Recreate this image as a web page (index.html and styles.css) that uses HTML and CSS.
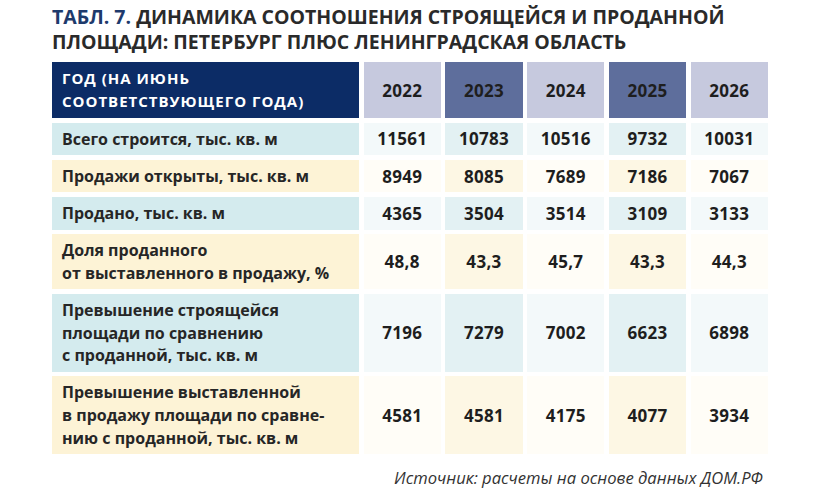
FILE: index.html
```html
<!DOCTYPE html>
<html lang="ru">
<head>
<meta charset="utf-8">
<title>Табл. 7</title>
<link rel="stylesheet" href="styles.css">
</head>
<body>
<div class="page">
  <h1 class="title"><span class="num">ТАБЛ. 7.</span> ДИНАМИКА СООТНОШЕНИЯ СТРОЯЩЕЙСЯ И ПРОДАННОЙ<br>ПЛОЩАДИ: ПЕТЕРБУРГ ПЛЮС ЛЕНИНГРАДСКАЯ ОБЛАСТЬ</h1>
  <div class="table">
    <div class="hlabel">ГОД (НА ИЮНЬ<br>СООТВЕТСТВУЮЩЕГО ГОДА)</div>
    <div class="hyear light">2022</div>
    <div class="hyear dark">2023</div>
    <div class="hyear light">2024</div>
    <div class="hyear dark">2025</div>
    <div class="hyear light">2026</div>

    <div class="label blue">Всего строится, тыс. кв. м</div>
    <div class="val blue-l">11561</div>
    <div class="val blue-d">10783</div>
    <div class="val blue-l">10516</div>
    <div class="val blue-d">9732</div>
    <div class="val blue-l">10031</div>

    <div class="label yellow">Продажи открыты, тыс. кв. м</div>
    <div class="val yel-l">8949</div>
    <div class="val yel-d">8085</div>
    <div class="val yel-l">7689</div>
    <div class="val yel-d">7186</div>
    <div class="val yel-l">7067</div>

    <div class="label blue">Продано, тыс. кв. м</div>
    <div class="val blue-l">4365</div>
    <div class="val blue-d">3504</div>
    <div class="val blue-l">3514</div>
    <div class="val blue-d">3109</div>
    <div class="val blue-l">3133</div>

    <div class="label yellow">Доля проданного<br>от выставленного в продажу, %</div>
    <div class="val yel-l">48,8</div>
    <div class="val yel-d">43,3</div>
    <div class="val yel-l">45,7</div>
    <div class="val yel-d">43,3</div>
    <div class="val yel-l">44,3</div>

    <div class="label blue">Превышение строящейся<br>площади по сравнению<br>с проданной, тыс. кв. м</div>
    <div class="val blue-l">7196</div>
    <div class="val blue-d">7279</div>
    <div class="val blue-l">7002</div>
    <div class="val blue-d">6623</div>
    <div class="val blue-l">6898</div>

    <div class="label yellow">Превышение выставленной<br>в продажу площади по сравне-<br>нию с проданной, тыс. кв. м</div>
    <div class="val yel-l">4581</div>
    <div class="val yel-d">4581</div>
    <div class="val yel-l">4175</div>
    <div class="val yel-d">4077</div>
    <div class="val yel-l">3934</div>
  </div>
  <p class="source">Источник: расчеты на основе данных ДОМ.РФ</p>
</div>
</body>
</html>
```

FILE: styles.css
```css
html, body {
  margin: 0;
  padding: 0;
  background: #ffffff;
}

.page {
  padding: 4px 0 0 52px;
  font-family: "Open Sans", "Noto Sans", sans-serif;
  color: #232323;
}

.title {
  margin: 0 0 8px 0;
  font-size: 19.5px;
  line-height: 25px;
  font-weight: 700;
  color: #2a2a2a;
}

.title .num {
  color: #1e3a6c;
}

.table {
  display: grid;
  grid-template-columns: 307px repeat(5, 77.2px);
  gap: 4.6px;
}

.hlabel {
  background: #0c2c66;
  color: #ffffff;
  font-size: 15px;
  font-weight: 700;
  letter-spacing: 1px;
  line-height: 23px;
  padding: 5px 10px;
}

.hyear {
  display: flex;
  align-items: center;
  justify-content: center;
  font-size: 17px;
  font-weight: 700;
  letter-spacing: 0.3px;
  color: #1e1e1e;
}

.hyear.light { background: #c6c9de; }
.hyear.dark { background: #5e6e9c; }

.label {
  font-size: 16px;
  font-weight: 700;
  line-height: 22.6px;
  padding: 5px 10px;
  color: #262626;
}

.val {
  display: flex;
  align-items: center;
  justify-content: center;
  font-size: 17px;
  font-weight: 700;
  letter-spacing: 0.3px;
  color: #1e1e1e;
}

.blue { background: #d4ebee; }
.yellow { background: #fdf3d6; }
.blue-l { background: #f3f9fa; }
.blue-d { background: #e3f1f3; }
.yel-l { background: #fffdf7; }
.yel-d { background: #fdf7e4; }

.source {
  margin: 12px 0 0 0;
  width: 711px;
  text-align: right;
  font-size: 16.6px;
  font-style: italic;
  color: #333333;
}
```
